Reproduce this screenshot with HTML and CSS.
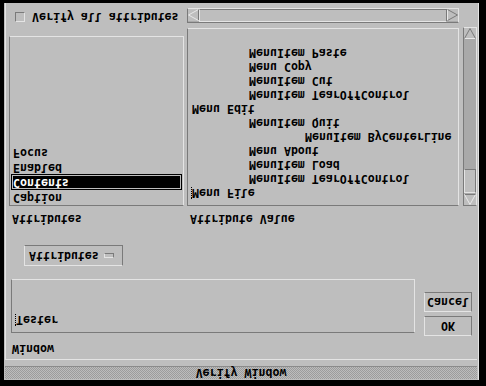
FILE: index.html
```html
<!DOCTYPE html>
<html lang="en">
<head>
    <meta charset="UTF-8">
    <title>Verify Window</title>
    <link rel="stylesheet" href="styles.css">
</head>
<body>

<div class="screen">
    <div class="window">
        <div class="titlebar">Verify Window</div>

        <div class="dialog">
            <div class="caption">Window</div>

            <div class="entry-row">
                <div class="textfield"><span class="cursor"></span>Tester</div>
                <div class="buttons">
                    <div class="button">OK</div>
                    <div class="button">Cancel</div>
                </div>
            </div>

            <div class="option-menu">
                <span>Attributes</span>
                <span class="option-mark"></span>
            </div>

            <div class="labels-row">
                <div class="label-left">Attributes</div>
                <div class="label-right">Attribute Value</div>
            </div>

            <div class="lists-row">
                <div class="left-col">
                    <div class="attr-list">
                        <div class="attr-item">Caption</div>
                        <div class="attr-item selected">Contents</div>
                        <div class="attr-item">Enabled</div>
                        <div class="attr-item">Focus</div>
                    </div>
                    <label class="check-row">
                        <span class="checkbox"></span>
                        Verify all attributes
                    </label>
                </div>

                <div class="right-col">
                    <div class="value-row">
                        <div class="value-list">
                            <div class="node lvl0"><span class="cursor"></span>Menu File</div>
                            <div class="node lvl1">MenuItem TearOffControl</div>
                            <div class="node lvl1">MenuItem Load</div>
                            <div class="node lvl1">Menu About</div>
                            <div class="node lvl2">MenuItem ByCenterLine</div>
                            <div class="node lvl1">MenuItem Quit</div>
                            <div class="node lvl0">Menu Edit</div>
                            <div class="node lvl1">MenuItem TearOffControl</div>
                            <div class="node lvl1">MenuItem Cut</div>
                            <div class="node lvl1">Menu Copy</div>
                            <div class="node lvl1">MenuItem Paste</div>
                        </div>
                        <div class="vscroll">
                            <svg class="arrow" width="12" height="11" viewBox="0 0 12 11">
                                <polyline points="0.5,10.5 6,0.5 11.5,10.5" fill="none" stroke="#e8e8e8"/>
                                <line x1="1" y1="10.5" x2="11.5" y2="10.5" stroke="#7a7a7a"/>
                            </svg>
                            <div class="vthumb"></div>
                            <div class="vtrough"></div>
                            <svg class="arrow" width="12" height="11" viewBox="0 0 12 11">
                                <polyline points="0.5,0.5 11.5,0.5" fill="none" stroke="#e8e8e8"/>
                                <polyline points="0.5,0.5 6,10.5 11.5,0.5" fill="none" stroke="#7a7a7a"/>
                            </svg>
                        </div>
                    </div>
                    <div class="hscroll">
                        <svg class="arrow" width="11" height="12" viewBox="0 0 11 12">
                            <polyline points="10.5,0.5 0.5,6 10.5,11.5" fill="none" stroke="#e8e8e8"/>
                            <line x1="10.5" y1="1" x2="10.5" y2="11.5" stroke="#7a7a7a"/>
                        </svg>
                        <div class="hthumb"></div>
                        <svg class="arrow" width="11" height="12" viewBox="0 0 11 12">
                            <line x1="0.5" y1="0.5" x2="0.5" y2="11.5" stroke="#e8e8e8"/>
                            <polyline points="0.5,0.5 10.5,6 0.5,11.5" fill="none" stroke="#7a7a7a"/>
                        </svg>
                    </div>
                </div>
            </div>
        </div>
    </div>
</div>

</body>
</html>
```

FILE: styles.css
```css
* {
    box-sizing: border-box;
}
body {
    margin: 0;
    background: #000;
    font-family: "DejaVu Sans Mono", "Liberation Mono", monospace;
    font-weight: bold;
    font-size: 11.6px;
    line-height: 14px;
    color: #000;
}
/* the whole capture is shown upside down */
.screen {
    width: 486px;
    height: 386px;
    background: #000;
    padding: 6px 0 0 4px;
    transform: scaleY(-1);
    overflow: hidden;
}
.window {
    width: 475px;
    height: 377px;
    background: #bebebe;
    padding: 1px 1px 0 1px;
    display: flex;
    flex-direction: column;
    border-right: 1px solid #e4e4e4;
}
.titlebar {
    height: 13px;
    line-height: 13px;
    text-align: center;
    background: repeating-conic-gradient(#9c9c9c 0 25%, #bcbcbc 0 50%) 0 0 / 2px 2px;
    border-bottom: 1px solid #8a8a8a;
}
.dialog {
    flex: 1;
    margin-top: 6px;
    border-top: 1px solid #e4e4e4;
    border-left: 1px solid #e4e4e4;
    display: flex;
    flex-direction: column;
}
.caption {
    margin: 3px 0 0 6px;
}
.entry-row {
    display: flex;
    margin-top: 6px;
}
.textfield {
    margin: 3px 0 0 5px;
    width: 404px;
    height: 54px;
    border: 1px solid #7a7a7a;
    border-right-color: #e4e4e4;
    border-bottom-color: #e4e4e4;
    padding: 5px 0 0 3px;
    position: relative;
}
.cursor {
    display: inline-block;
    width: 1px;
    height: 12px;
    border-left: 1px dotted #000;
    vertical-align: -2px;
}
.buttons {
    margin-left: 9px;
    display: flex;
    flex-direction: column;
    gap: 4px;
}
.button {
    width: 48px;
    height: 20px;
    line-height: 18px;
    text-align: center;
    border: 1px solid #e4e4e4;
    border-right-color: #7a7a7a;
    border-bottom-color: #7a7a7a;
}
.option-menu {
    margin: 13px 0 0 18px;
    width: 99px;
    height: 21px;
    line-height: 19px;
    padding-left: 4px;
    border: 1px solid #e4e4e4;
    border-right-color: #7a7a7a;
    border-bottom-color: #7a7a7a;
    display: flex;
    align-items: center;
}
.option-mark {
    width: 10px;
    height: 5px;
    margin-left: 5px;
    border: 1px solid #e4e4e4;
    border-right-color: #7a7a7a;
    border-bottom-color: #7a7a7a;
}
.labels-row {
    display: flex;
    margin-top: 19px;
}
.label-left {
    margin-left: 6px;
    width: 178px;
}
.lists-row {
    display: flex;
    margin-top: 6px;
}
.left-col {
    margin-left: 3px;
    width: 175px;
}
.attr-list {
    height: 170px;
    border: 1px solid #7a7a7a;
    border-right-color: #e4e4e4;
    border-bottom-color: #e4e4e4;
    padding: 0 1px;
}
.attr-item {
    height: 15px;
    line-height: 15px;
    padding-left: 2px;
}
.attr-item.selected {
    background: #000;
    color: #fff;
    outline: 1px solid #bebebe;
    outline-offset: -2px;
    height: 16px;
    margin-bottom: -1px;
}
.check-row {
    display: flex;
    align-items: center;
    margin-top: 12px;
    margin-left: 6px;
    gap: 7px;
}
.checkbox {
    width: 10px;
    height: 10px;
    border: 1px solid #e4e4e4;
    border-left-color: #7a7a7a;
    border-bottom-color: #7a7a7a;
}
.right-col {
    margin-left: 3px;
}
.value-row {
    display: flex;
}
.value-list {
    width: 272px;
    height: 178px;
    border: 1px solid #7a7a7a;
    border-right-color: #e4e4e4;
    border-bottom-color: #e4e4e4;
    padding: 5px 0 0 4px;
}
.node {
    height: 14px;
}
.lvl0:first-child {
    margin-left: -1px;
}
.lvl1 {
    padding-left: 57px;
}
.lvl2 {
    padding-left: 113px;
}
.vscroll {
    margin-left: 4px;
    width: 14px;
    height: 179px;
    border: 1px solid #7a7a7a;
    border-right-color: #e4e4e4;
    border-bottom-color: #e4e4e4;
    display: flex;
    flex-direction: column;
    background: #a9a9a9;
}
.arrow {
    display: block;
    background: #bebebe;
}
.vthumb {
    height: 24px;
    background: #bebebe;
    border: 1px solid #e4e4e4;
    border-right-color: #7a7a7a;
    border-bottom-color: #7a7a7a;
    margin-top: 1px;
}
.vtrough {
    flex: 1;
}
.hscroll {
    margin-top: 4px;
    width: 272px;
    height: 15px;
    border: 1px solid #7a7a7a;
    border-right-color: #e4e4e4;
    border-bottom-color: #e4e4e4;
    display: flex;
    align-items: center;
    background: #a9a9a9;
}
.hthumb {
    flex: 1;
    height: 13px;
    background: #bebebe;
    border: 1px solid #e4e4e4;
    border-right-color: #7a7a7a;
    border-bottom-color: #7a7a7a;
}
```
